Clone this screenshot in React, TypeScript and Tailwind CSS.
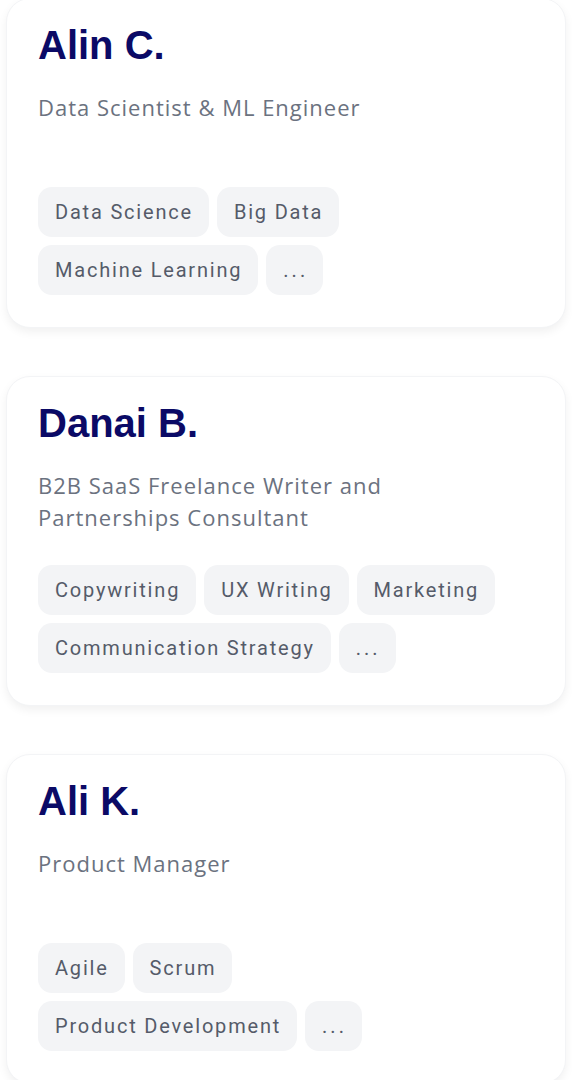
import React from "react";

type Person = { name: string; title: string; tags: string[] };

const people: Person[] = [
  { name: "Alin C.", title: "Data Scientist & ML Engineer", tags: ["Data Science", "Big Data", "Machine Learning"] },
  {
    name: "Danai B.",
    title: "B2B SaaS Freelance Writer and Partnerships Consultant",
    tags: ["Copywriting", "UX Writing", "Marketing", "Communication Strategy"],
  },
  { name: "Ali K.", title: "Product Manager", tags: ["Agile", "Scrum", "Product Development"] },
];

function Tag({ children }: { children: React.ReactNode }) {
  return (
    <span className="rounded-[14px] bg-[#f3f4f6] pl-[17px] pr-[16px] py-3 text-[20px] leading-[26px] tracking-[1.8px] text-[#555b69]">
      {children}
    </span>
  );
}

function More() {
  return (
    <span className="rounded-[14px] bg-[#f3f4f6] pl-[17px] pr-[15px] py-3 text-[20px] leading-[26px] tracking-[3px] text-[#555b69]">
      ...
    </span>
  );
}

function Card({ p }: { p: Person }) {
  return (
    <div className="rounded-[24px] border border-[#f3f4f6] bg-white px-[31px] pt-6 pb-8 shadow-[0_4px_10px_rgba(0,0,0,0.06)]">
      <h2 className="font-['Liberation_Sans',Arial,sans-serif] text-[40px] font-bold leading-[44px] text-[#0b0a66]">
        {p.name}
      </h2>
      <p className="mt-6 h-16 max-w-[400px] font-['Open_Sans',sans-serif] text-[22px] leading-[32px] tracking-[1px] text-[#6b7280]">
        {p.title}
      </p>
      <div className="mt-8 flex max-w-[460px] flex-wrap gap-2 font-['Roboto',sans-serif]">
        {p.tags.map((t) => (
          <Tag key={t}>{t}</Tag>
        ))}
        <More />
      </div>
    </div>
  );
}

export default function App() {
  return (
    <div className="min-h-screen bg-white px-[6px] -mt-[2px] flex flex-col gap-12">
      {people.map((p) => (
        <Card key={p.name} p={p} />
      ))}
    </div>
  );
}
